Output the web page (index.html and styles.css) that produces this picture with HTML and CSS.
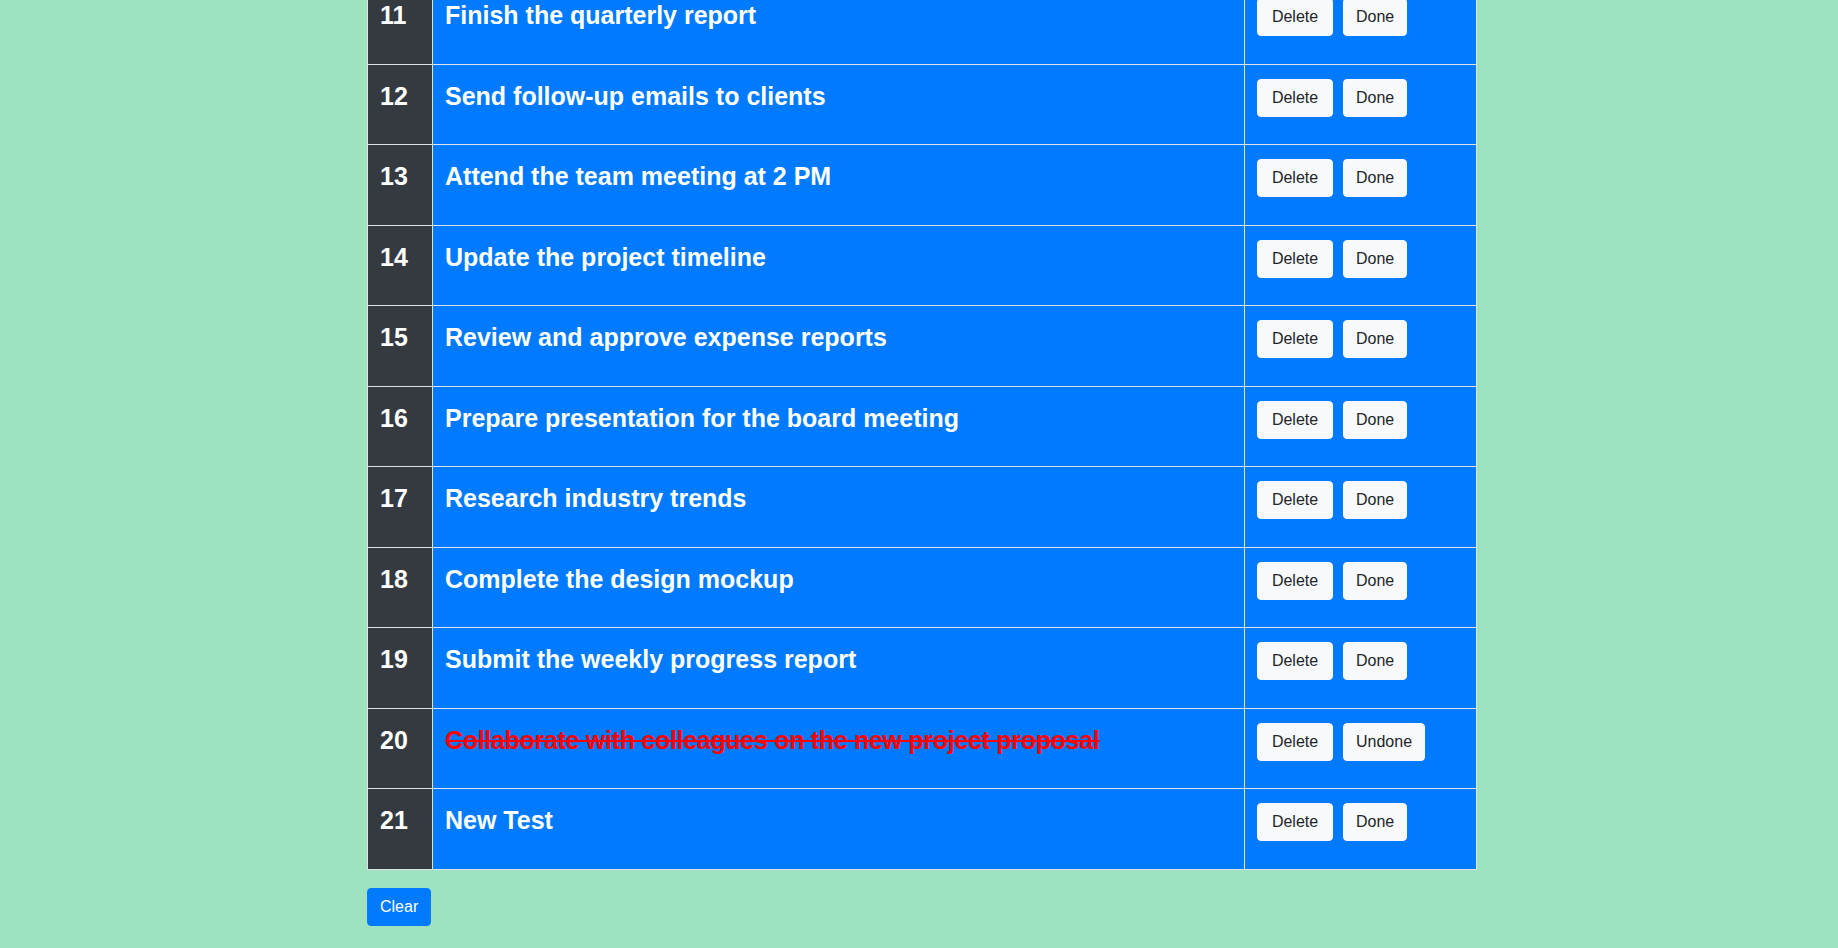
FILE: index.html
```html
<!DOCTYPE html>
<html lang="en">
<head>
<meta charset="utf-8">
<title>Todo List</title>
<link rel="stylesheet" href="styles.css">
</head>
<body>
<main class="page">
  <table class="todo-table">
    <tbody>
      <tr><td class="num">11</td><td class="task">Finish the quarterly report</td><td class="actions"><div class="btns"><button class="btn btn-light btn-del">Delete</button><button class="btn btn-light">Done</button></div></td></tr>
      <tr><td class="num">12</td><td class="task">Send follow-up emails to clients</td><td class="actions"><div class="btns"><button class="btn btn-light btn-del">Delete</button><button class="btn btn-light">Done</button></div></td></tr>
      <tr><td class="num">13</td><td class="task">Attend the team meeting at 2 PM</td><td class="actions"><div class="btns"><button class="btn btn-light btn-del">Delete</button><button class="btn btn-light">Done</button></div></td></tr>
      <tr><td class="num">14</td><td class="task">Update the project timeline</td><td class="actions"><div class="btns"><button class="btn btn-light btn-del">Delete</button><button class="btn btn-light">Done</button></div></td></tr>
      <tr><td class="num">15</td><td class="task">Review and approve expense reports</td><td class="actions"><div class="btns"><button class="btn btn-light btn-del">Delete</button><button class="btn btn-light">Done</button></div></td></tr>
      <tr><td class="num">16</td><td class="task">Prepare presentation for the board meeting</td><td class="actions"><div class="btns"><button class="btn btn-light btn-del">Delete</button><button class="btn btn-light">Done</button></div></td></tr>
      <tr><td class="num">17</td><td class="task">Research industry trends</td><td class="actions"><div class="btns"><button class="btn btn-light btn-del">Delete</button><button class="btn btn-light">Done</button></div></td></tr>
      <tr><td class="num">18</td><td class="task">Complete the design mockup</td><td class="actions"><div class="btns"><button class="btn btn-light btn-del">Delete</button><button class="btn btn-light">Done</button></div></td></tr>
      <tr><td class="num">19</td><td class="task">Submit the weekly progress report</td><td class="actions"><div class="btns"><button class="btn btn-light btn-del">Delete</button><button class="btn btn-light">Done</button></div></td></tr>
      <tr><td class="num">20</td><td class="task task-done">Collaborate with colleagues on the new project proposal</td><td class="actions"><div class="btns"><button class="btn btn-light btn-del">Delete</button><button class="btn btn-light">Undone</button></div></td></tr>
      <tr><td class="num">21</td><td class="task">New Test</td><td class="actions"><div class="btns"><button class="btn btn-light btn-del">Delete</button><button class="btn btn-light">Done</button></div></td></tr>
    </tbody>
  </table>
  <div class="footer-actions">
    <button class="btn btn-primary">Clear</button>
  </div>
</main>
</body>
</html>
```

FILE: styles.css
```css
* {
  box-sizing: border-box;
}

html, body {
  margin: 0;
  padding: 0;
  height: 100%;
  overflow: hidden;
}

body {
  background: #9fe2bf;
  font-family: "Liberation Sans", Arial, sans-serif;
  color: #212529;
}

.page {
  width: 1110px;
  margin: -17px 0 0 367px;
}

.todo-table {
  width: 1110px;
  border-collapse: collapse;
  table-layout: fixed;
  border: 1px solid #dee2e6;
}

.todo-table tr {
  height: 80.5px;
}

.todo-table td {
  border: 1px solid #dee2e6;
  padding: 13px 12px 11px;
  vertical-align: top;
  background: #007bff;
  color: #fff;
  font-weight: 700;
  font-size: 25px;
  line-height: 1.5;
}

.todo-table td.num {
  width: 65px;
  background: #343a40;
}

.todo-table td.actions {
  width: 232px;
  padding-top: 14px;
}

.task-done {
  color: #ff0000 !important;
  text-decoration: line-through;
  text-decoration-thickness: 2px;
  letter-spacing: -0.3px;
}

.btns {
  display: flex;
  gap: 10px;
}

.btn {
  display: inline-block;
  font-family: "Liberation Sans", Arial, sans-serif;
  font-weight: 400;
  font-size: 16px;
  line-height: 24px;
  height: 38px;
  padding: 6px 12px;
  border: 1px solid transparent;
  border-radius: 4px;
  cursor: pointer;
  text-align: center;
}

.btn-light {
  background: #f8f9fa;
  border-color: #f8f9fa;
  color: #212529;
}

.btn-del {
  min-width: 76px;
}

.btn-primary {
  background: #007bff;
  border-color: #007bff;
  color: #fff;
  min-width: 64px;
}

.footer-actions {
  margin-top: 18px;
}
```
